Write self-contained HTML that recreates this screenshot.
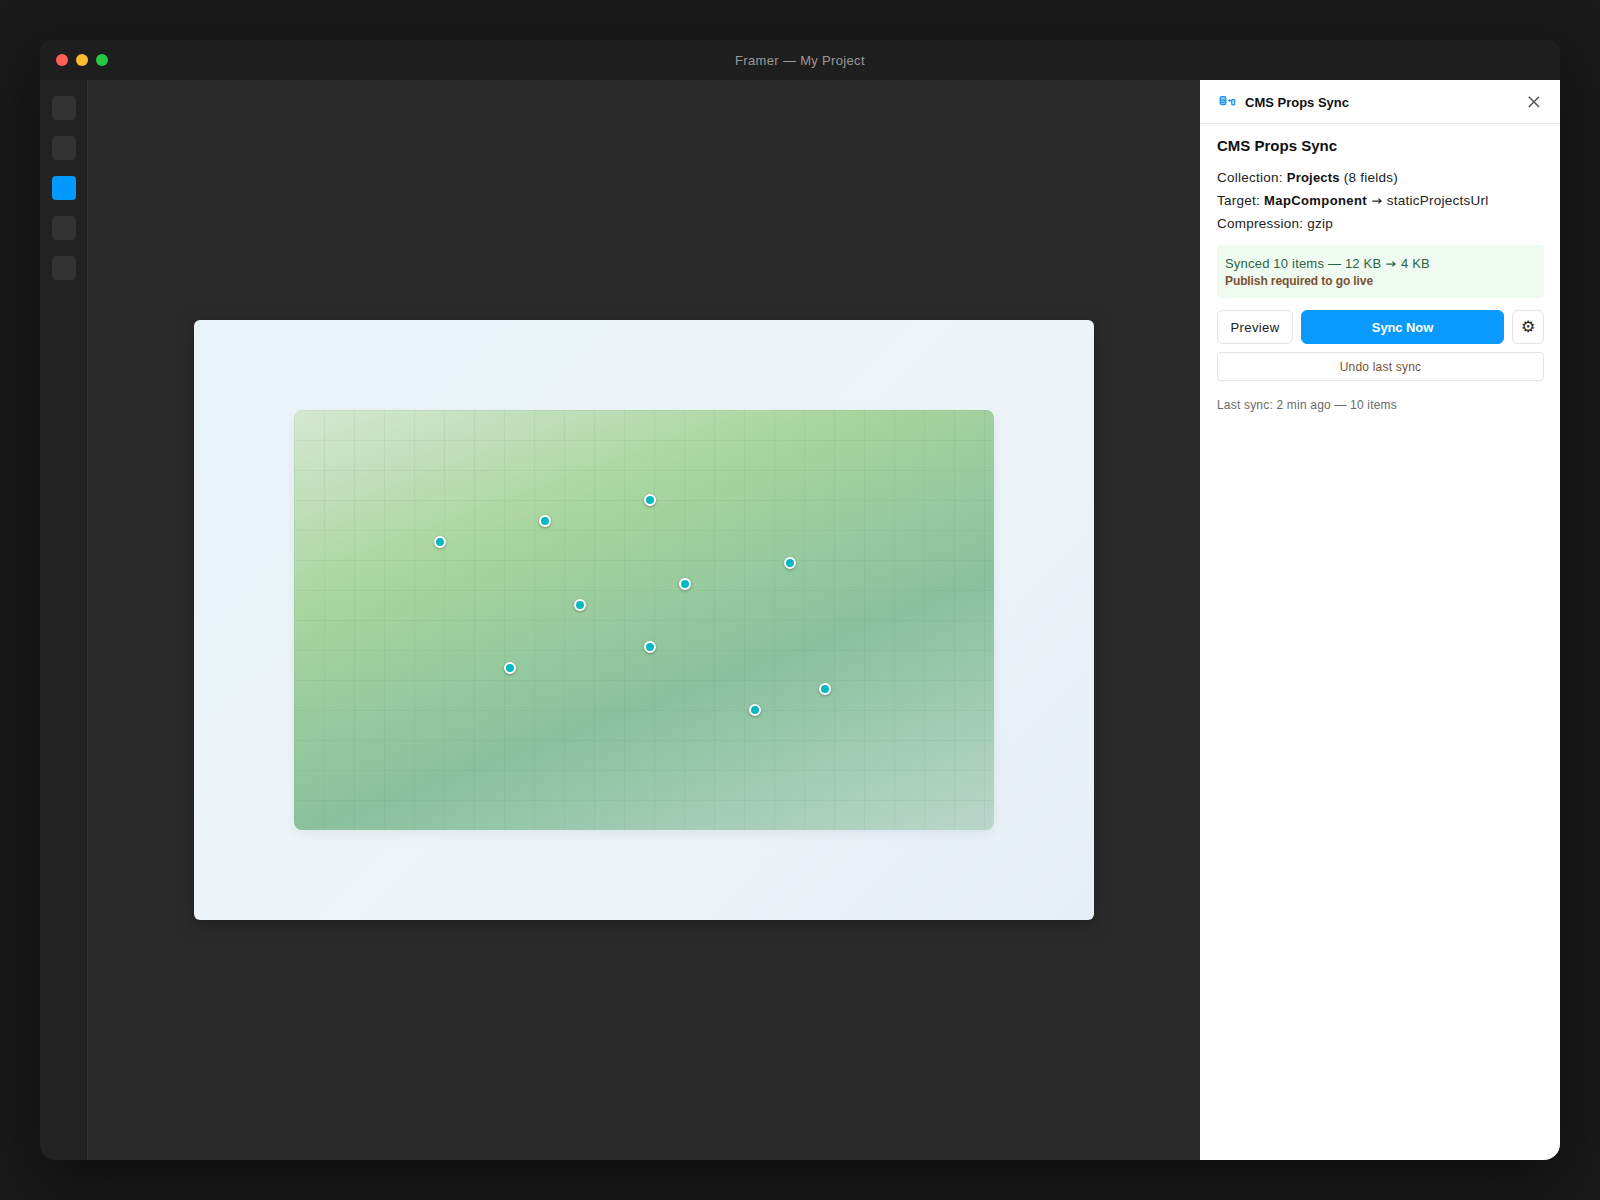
<!DOCTYPE html>
<html>
<head>
<meta charset="utf-8">
<style>
*{box-sizing:border-box;margin:0;padding:0}
html,body{width:1600px;height:1200px;overflow:hidden;background:#1a1a1a;font-family:"Liberation Sans",sans-serif}
.win{position:absolute;left:40px;top:40px;width:1520px;height:1120px;border-radius:12px 12px 16px 16px;background:#1e1e1e;overflow:hidden;box-shadow:0 20px 60px rgba(0,0,0,0.5)}
.title{position:absolute;left:0;top:0;width:1520px;height:40px;background:#1e1e1e}
.dot{position:absolute;top:14px;width:12px;height:12px;border-radius:50%}
.ttext{position:absolute;left:0;width:1520px;top:13px;text-align:center;color:#9a9a9a;font-size:13px;line-height:16px;letter-spacing:0.33px}
.side{position:absolute;left:0;top:40px;width:48px;height:1080px;background:#222;border-right:1px solid #333}
.sq{position:absolute;left:12px;width:24px;height:24px;border-radius:4px;background:#333}
.canvas{position:absolute;left:48px;top:40px;width:1112px;height:1080px;background:#2a2a2a}
.frame{position:absolute;left:106px;top:240px;width:900px;height:600px;border-radius:6px;background:linear-gradient(135deg,#e8f3fa 0%,#eef5f9 50%,#e6eef7 100%);box-shadow:0 4px 16px rgba(0,0,0,0.25)}
.map{position:absolute;left:100px;top:90px;width:700px;height:420px;border-radius:8px;overflow:hidden;
 background:linear-gradient(160deg,#d4e8d0 0%,#a9d59f 30%,#89c19d 63%,#bad6cb 100%);box-shadow:0 4px 12px rgba(0,0,0,0.06)}
.grid{position:absolute;inset:0;background-image:linear-gradient(to right,rgba(60,120,80,0.07) 1px,transparent 1px),linear-gradient(to bottom,rgba(60,120,80,0.07) 1px,transparent 1px);background-size:30px 30px}
.pin{position:absolute;width:12px;height:12px;border-radius:50%;background:#07b8c2;border:2px solid #fff;box-shadow:0 1px 3px rgba(0,0,0,0.3)}
.panel{position:absolute;left:1160px;top:40px;width:360px;height:1080px;background:#fff}
.phead{position:absolute;left:0;top:0;width:360px;height:44px;border-bottom:1px solid #e6e6e6}
.phead .t{position:absolute;left:45px;top:15px;font-size:13px;font-weight:bold;color:#111;line-height:16px}
.body{position:absolute;left:17px;top:44px;width:327px}
.h2{position:absolute;left:0;top:13px;font-size:15px;font-weight:bold;color:#111;line-height:18px;white-space:nowrap}
.ln{position:absolute;left:0;font-size:13.5px;color:#222;line-height:16px;white-space:nowrap;letter-spacing:0.25px}
.ln b{color:#111;font-size:13px;letter-spacing:0.2px}
.ar{display:inline-block;vertical-align:1.5px;margin:0 4.6px 0 5px}
.ok{position:absolute;left:0;top:121px;width:327px;height:53px;background:#effaf1;border-radius:4px}
.ok .a{position:absolute;left:8px;top:11px;font-size:13px;color:#2d6543;line-height:16px;white-space:nowrap;letter-spacing:0.2px}
.ok .b{position:absolute;left:8px;top:29px;font-size:12px;font-weight:bold;color:#7a5230;line-height:15px;white-space:nowrap;letter-spacing:-0.1px}
.btn{position:absolute;top:186px;height:34px;border:1px solid #e3e3e3;border-radius:6px;background:#fff;font-size:13px;color:#222;text-align:center;line-height:33px}
.undo{position:absolute;left:0;top:228px;width:327px;height:29px;border:1px solid #e3e3e3;border-radius:4px;font-size:12px;color:#7a5236;text-align:center;line-height:28px;letter-spacing:0.2px}
.last{position:absolute;left:0;top:274px;font-size:12px;color:#6a6a6a;line-height:15px;white-space:nowrap;letter-spacing:0.19px}
</style>
</head>
<body>
<div class="win">
  <div class="title">
    <div class="dot" style="left:16px;background:#ff5f57"></div>
    <div class="dot" style="left:36px;background:#febc2e"></div>
    <div class="dot" style="left:56px;background:#28c840"></div>
    <div class="ttext">Framer — My Project</div>
  </div>
  <div class="side">
    <div class="sq" style="top:16px"></div>
    <div class="sq" style="top:56px"></div>
    <div class="sq" style="top:96px;background:#0099ff"></div>
    <div class="sq" style="top:136px"></div>
    <div class="sq" style="top:176px"></div>
  </div>
  <div class="canvas">
    <div class="frame">
      <div class="map">
        <div class="grid"></div>
        <div class="pin" style="left:140px;top:126px"></div>
        <div class="pin" style="left:245px;top:105px"></div>
        <div class="pin" style="left:350px;top:84px"></div>
        <div class="pin" style="left:490px;top:147px"></div>
        <div class="pin" style="left:385px;top:168px"></div>
        <div class="pin" style="left:280px;top:189px"></div>
        <div class="pin" style="left:350px;top:231px"></div>
        <div class="pin" style="left:210px;top:252px"></div>
        <div class="pin" style="left:525px;top:273px"></div>
        <div class="pin" style="left:455px;top:294px"></div>
      </div>
    </div>
  </div>
  <div class="panel">
    <div class="phead">
      <svg style="position:absolute;left:17px;top:14px" width="20" height="16" viewBox="0 0 20 16">
        <rect x="3.2" y="2.6" width="5.6" height="8" rx="1.6" fill="#7fd4ff" stroke="#1e8fe6" stroke-width="1.3"/>
        <line x1="3.2" y1="6.2" x2="8.8" y2="6.2" stroke="#1e8fe6" stroke-width="1.2"/>
        <line x1="3.2" y1="8.4" x2="8.8" y2="8.4" stroke="#1e8fe6" stroke-width="1"/>
        <path d="M10.9 6.6 L13.1 4.9 L13.1 8.3 Z" fill="#1e8fe6"/><line x1="12.5" y1="6.6" x2="14.6" y2="6.6" stroke="#1e8fe6" stroke-width="1.2"/>
        <rect x="14.7" y="5.6" width="3" height="5.2" rx="0.8" fill="#aee6ff" stroke="#1e8fe6" stroke-width="1.2"/>
      </svg>
      <div class="t">CMS Props Sync</div>
      <svg style="position:absolute;left:327px;top:15px" width="14" height="14" viewBox="0 0 14 14">
        <path d="M1.8 1.8 L12 12 M12 1.8 L1.8 12" stroke="#555" stroke-width="1.5" stroke-linecap="butt"/>
      </svg>
    </div>
    <div class="body">
      <div class="h2">CMS Props Sync</div>
      <div class="ln" style="top:46px">Collection: <b>Projects</b> (8 fields)</div>
      <div class="ln" style="top:69px">Target: <b style="letter-spacing:0.4px">MapComponent</b><svg class="ar" width="10" height="6" viewBox="0 0 10 6"><path d="M0.3 3 H9 M6.4 0.6 L9.1 3 L6.4 5.4" fill="none" stroke="currentColor" stroke-width="1.25"/></svg>staticProjectsUrl</div>
      <div class="ln" style="top:92px">Compression: gzip</div>
      <div class="ok"><div class="a">Synced 10 items — 12 KB<svg class="ar" width="10" height="6" viewBox="0 0 10 6"><path d="M0.3 3 H9 M6.4 0.6 L9.1 3 L6.4 5.4" fill="none" stroke="currentColor" stroke-width="1.25"/></svg>4 KB</div><div class="b">Publish required to go live</div></div>
      <div class="btn" style="left:0;width:76px;letter-spacing:0.4px">Preview</div>
      <div class="btn" style="left:84px;width:203px;background:#0a99ff;border-color:#0a99ff;color:#fff;font-weight:bold;letter-spacing:-0.1px">Sync Now</div>
      <div class="btn" style="left:295px;width:32px;font-size:16px;line-height:31px">⚙</div>
      <div class="undo">Undo last sync</div>
      <div class="last">Last sync: 2 min ago — 10 items</div>
    </div>
  </div>
</div>
</body>
</html>
